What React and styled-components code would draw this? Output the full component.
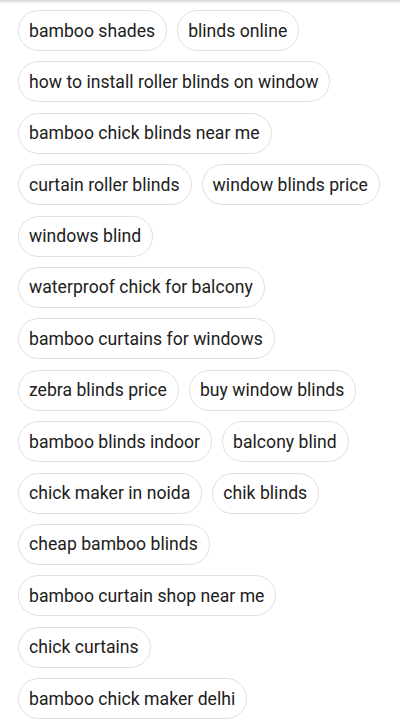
import React from "react";
import styled, { createGlobalStyle } from "styled-components";

const Global = createGlobalStyle`
  html, body { margin: 0; padding: 0; background: #ffffff; }
  body { font-family: Roboto, "Noto Sans", Arial, sans-serif; }
`;

const Page = styled.div`
  width: 400px;
  height: 722px;
  overflow: hidden;
  position: relative;
  background: #fff;
`;

const TopShade = styled.div`
  height: 3px;
  background: linear-gradient(#d6d6d6, #f2f2f2);
`;

const ChipList = styled.div`
  display: flex;
  flex-wrap: wrap;
  align-content: flex-start;
  gap: 10.4px 10px;
  padding: 7px 20px 0 18px;
`;

const Chip = styled.div`
  box-sizing: border-box;
  height: 41px;
  display: inline-flex;
  align-items: center;
  padding: 0 11px 0 10px;
  border: 1.5px solid #dfdfdf;
  border-radius: 21px;
  font-size: 17.6px;
  color: #202020;
  white-space: nowrap;
  letter-spacing: 0.02px;
`;

const items = [
  "bamboo shades",
  "blinds online",
  "how to install roller blinds on window",
  "bamboo chick blinds near me",
  "curtain roller blinds",
  "window blinds price",
  "windows blind",
  "waterproof chick for balcony",
  "bamboo curtains for windows",
  "zebra blinds price",
  "buy window blinds",
  "bamboo blinds indoor",
  "balcony blind",
  "chick maker in noida",
  "chik blinds",
  "cheap bamboo blinds",
  "bamboo curtain shop near me",
  "chick curtains",
  "bamboo chick maker delhi",
];

export default function App() {
  return (
    <Page>
      <Global />
      <TopShade />
      <ChipList>
        {items.map((t) => (
          <Chip key={t}>{t}</Chip>
        ))}
      </ChipList>
    </Page>
  );
}
